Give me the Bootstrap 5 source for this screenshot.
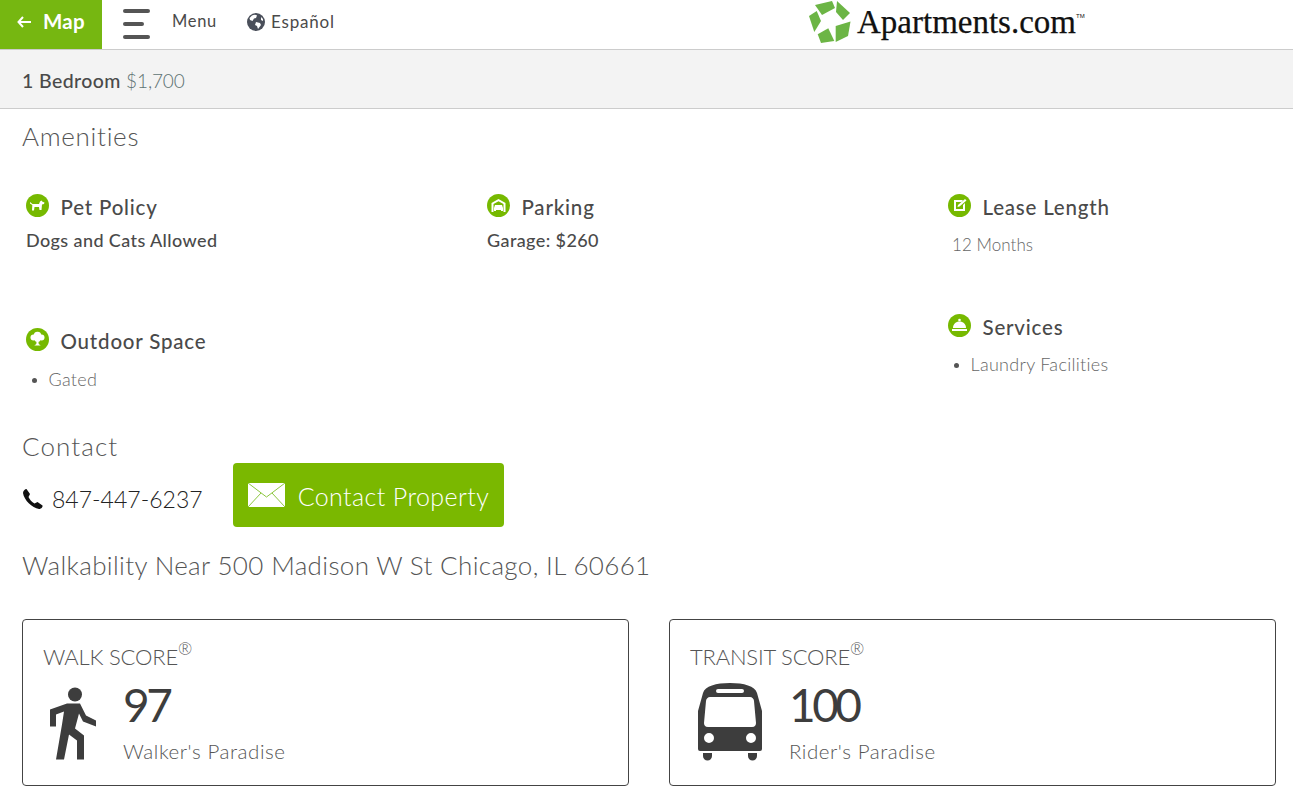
<!DOCTYPE html>
<html lang="en">
<head>
  <meta charset="UTF-8">
  <meta name="viewport" content="width=device-width, initial-scale=1.0">
  <title>1 Bedroom</title>
  <link href="https://cdn.jsdelivr.net/npm/bootstrap@5.3.0/dist/css/bootstrap.min.css" rel="stylesheet">
  <style>
    body { font-family: Lato, "Liberation Sans", sans-serif; color: #4a4a4a; overflow: hidden; }
    .top-bar { height: 50px; border-bottom: 1px solid #ccc; }
    .map-btn { width: 102px; height: 49px; background: #76b711; color: #fff; font-size: 20.5px; font-weight: 700; gap: 11px; padding: 0 0 6px 17px; letter-spacing: .2px; }
    .burger { width: 27px; margin-left: 21px; margin-right: 22px; gap: 9px; margin-top: -1px; }
    .burger span { display: block; height: 4px; background: #555; border-radius: 2px; }
    .burger span:nth-child(2) { width: 21px; }
    .menu-link { font-size: 16.5px; color: #4a4a4a; margin-top: -6px; letter-spacing: .7px; }
    .lang-link { font-size: 17px; color: #4a4a4a; margin-left: 30px; gap: 6px; letter-spacing: .8px; margin-top: -5px; }
    .logo-box { position: absolute; left: 809px; top: 0; gap: 6px; }
    .logo-word { font-family: "Liberation Serif", serif; font-size: 33px; color: #111; letter-spacing: 0; line-height: 44px; -webkit-text-stroke: .25px #111; }
    .logo-word sup { font-size: 6px; top: -15px; font-family: "Liberation Sans", sans-serif; letter-spacing: 0; -webkit-text-stroke: 0; }
    .sub-bar { height: 59px; background: #f3f3f3; border-bottom: 1px solid #ccc; padding: 4px 0 0 22px; font-size: 19.5px; font-weight: 500; letter-spacing: .4px; }
    .sub-bar .price { font-weight: 300; font-size: 19px; letter-spacing: -.1px; color: #5d7272; }
    .page-body { padding: 0 17px 0 22px; }
    .sect-title { font-size: 26px; font-weight: 300; color: #555; letter-spacing: .7px; line-height: 30px; margin: 0; }
    .amen-title { margin-top: 12px; }
    .amen-grid { padding-left: 4px; margin-top: 43px; height: 237px; }
    .amen-col { flex: 0 0 461px; }
    .amen-col-last { flex: 1 1 0; }
    .amen-item { height: 134px; }
    .amen-item.short { height: 120px; }
    .amen-head { gap: 11.500px; height: 26px; margin-bottom: 8px; }
    .amen-head h3 { font-size: 20.5px; font-weight: 500; margin: 0; color: #4a4a4a; letter-spacing: .8px; line-height: 26px; }
    .amen-ico { width: 23px; height: 23px; flex: none; margin-top: -3px; }
    .amen-bold { font-size: 18px; font-weight: 500; margin: 0; line-height: 24px; letter-spacing: .4px; }
    .amen-light { font-size: 17px; font-weight: 300; color: #666; line-height: 24px; margin: 0; letter-spacing: .05px; }
    .amen-offset { margin: 13px 0 0 4px; }
    .amen-list { list-style: none; padding: 0; margin: 12px 0 0 0; }
    .amen-list li { font-size: 18px; font-weight: 300; color: #666; line-height: 24px; letter-spacing: .3px; }
    .amen-list li::before { content: ""; display: inline-block; width: 5px; height: 5px; border-radius: 50%; background: #555; margin: 0 11.500px 3px 6px; }
    .gated-list { margin-top: 13px; }
    .contact-title { letter-spacing: 1.1px; }
    .contact-row { margin-top: 2px; gap: 30px; }
    .phone-num { font-size: 23px; font-weight: 300; color: #222; gap: 8px; letter-spacing: .02px; margin-top: 8px; }
    .contact-btn { width: 271px; height: 64px; background: #7ab800; color: #fff; font-size: 25px; font-weight: 300; gap: 13px; padding: 0 0 0 15px; border: 0; border-radius: 4px; letter-spacing: .4px; }
    .contact-btn span { margin-top: 4px; }
    .walk-title { margin-top: 23px; letter-spacing: .35px; }
    .score-row { display: grid; grid-template-columns: 607px 607px; gap: 40px; margin-top: 39px; }
    .score-box { height: 167px; border: 1px solid #444; border-radius: 4px; padding: 22px 0 0 20px; }
    .score-name { font-size: 22px; font-weight: 300; color: #555; line-height: 30px; letter-spacing: -.2px; }
    .score-name sup { font-size: 17px; top: -10px; }
    .score-num { font-size: 46px; line-height: 50px; font-weight: 400; color: #3d3d3d; letter-spacing: -3.5px; margin-top: -3px; }
    .score-txt { font-size: 20.5px; font-weight: 300; color: #555; line-height: 26px; margin: 8px 0 0 0; letter-spacing: .55px; }
    .walk-ico { width: 46px; height: 73px; margin: 4px 27px 0 7px; }
    .bus-ico { width: 64px; height: 78px; margin: 0 27px 0 8px; }
    .score-body { margin-top: 11px; }
  </style>
</head>
<body>
<div class="top-bar d-flex align-items-center position-relative">
  <a class="map-btn d-flex align-items-center text-decoration-none" href="#">
    <svg width="15" height="12" viewBox="0 0 15 12"><path d="M6 1 1.500 6 6 11M2 6h12" fill="none" stroke="#fff" stroke-width="2"/></svg>
    <span>Map</span>
  </a>
  <div class="burger d-flex flex-column"><span></span><span></span><span></span></div>
  <a class="menu-link text-decoration-none" href="#">Menu</a>
  <a class="lang-link d-flex align-items-center text-decoration-none" href="#">
    <svg width="18" height="18" viewBox="0 0 18 18"><circle cx="9" cy="9" r="9" fill="#4a4f5a"/><path d="M5 2.500c2-1 4-1 5 0L9 5 7 5.500 5.500 8 3 7 2.500 5ZM9 9l4 1 1 2-3 4-1-3-2-1ZM14 4l2 2v2l-2-1Z" fill="#fff"/></svg>
    <span>Español</span>
  </a>
  <div class="logo-box d-flex align-items-center">
    <svg width="42" height="42" viewBox="0 0 42 42"><g fill="#6cb545"><path d="M6 4 23 0l3 7-13 7Z"/><path d="M28 0l13 12-7 7-7-8Z"/><path d="M0 15l7.700-5L12 20 5.300 31Z"/><path d="M26.700 25 41.500 20.500 39 35 26.700 41Z"/><path d="M8.700 33.300 19.300 27.300 25.300 40 12 42Z"/></g></svg>
    <span class="logo-word">Apartments.com<sup>TM</sup></span>
  </div>
</div>
<div class="sub-bar d-flex align-items-center">1 Bedroom&nbsp;<span class="price">$1,700</span></div>
<div class="page-body">
  <h2 class="sect-title amen-title">Amenities</h2>
  <div class="amen-grid d-flex">
    <div class="amen-col">
      <div class="amen-item">
        <div class="amen-head d-flex align-items-center">
          <svg class="amen-ico" viewBox="0 0 23 23"><circle cx="11.500" cy="11.500" r="11.500" fill="#76b900"/><path d="M4 8l2.500 2H13l1-2.500 1.500-1 1 1.300 2 .7-.5 1.500-2 .5-.5 5.500h-2l-.5-3H8.500L8 16.500H6l.3-5.500L4 9.500Z" fill="#fff"/></svg>
          <h3>Pet Policy</h3>
        </div>
        <p class="amen-bold">Dogs and Cats Allowed</p>
      </div>
      <div class="amen-item">
        <div class="amen-head d-flex align-items-center">
          <svg class="amen-ico" viewBox="0 0 23 23"><circle cx="11.500" cy="11.500" r="11.500" fill="#76b900"/><g fill="#fff"><circle cx="11.500" cy="7.500" r="3.800"/><circle cx="7.500" cy="9.500" r="3"/><circle cx="15.500" cy="9.500" r="3"/><circle cx="11.500" cy="11" r="3"/><path d="M10.700 12h1.600l.4 4 2 1.500H8.300l2-1.500Z"/></g></svg>
          <h3>Outdoor Space</h3>
        </div>
        <ul class="amen-list gated-list"><li>Gated</li></ul>
      </div>
    </div>
    <div class="amen-col">
      <div class="amen-item">
        <div class="amen-head d-flex align-items-center">
          <svg class="amen-ico" viewBox="0 0 23 23"><circle cx="11.500" cy="11.500" r="11.500" fill="#76b900"/><path d="M4.500 18V9l7-4 7 4v9h-2V10l-5-2.800L6.500 10v8Z" fill="#fff"/><path d="M8 11h7l1 3v3h-2v-1H9v1H7v-3Z" fill="#fff"/></svg>
          <h3>Parking</h3>
        </div>
        <p class="amen-bold">Garage: $260</p>
      </div>
    </div>
    <div class="amen-col-last">
      <div class="amen-item short">
        <div class="amen-head d-flex align-items-center">
          <svg class="amen-ico" viewBox="0 0 23 23"><circle cx="11.500" cy="11.500" r="11.500" fill="#76b900"/><path d="M6 6h9l-1.500 2H8v7h7v-4l2-2v8H6Z" fill="#fff"/><path d="M10 11l7-6 1.500 1.500-7 6-2 .5Z" fill="#fff"/></svg>
          <h3>Lease Length</h3>
        </div>
        <p class="amen-light amen-offset">12 Months</p>
      </div>
      <div class="amen-item">
        <div class="amen-head d-flex align-items-center">
          <svg class="amen-ico" viewBox="0 0 23 23"><circle cx="11.500" cy="11.500" r="11.500" fill="#76b900"/><circle cx="11.500" cy="6" r="1.300" fill="#fff"/><path d="M5 14c0-4 3-6.500 6.500-6.500S18 10 18 14Z" fill="#fff"/><rect x="4" y="15" width="15" height="2" fill="#fff"/></svg>
          <h3>Services</h3>
        </div>
        <ul class="amen-list"><li>Laundry Facilities</li></ul>
      </div>
    </div>
  </div>
  <h2 class="sect-title contact-title">Contact</h2>
  <div class="contact-row d-flex align-items-center">
    <div class="phone-num d-flex align-items-center">
      <svg width="22" height="22" viewBox="0 0 22 22"><path d="M4.500 1 8 6 6.500 9c1 2.500 3.500 5 6 6.500l3-1.500 5 3.500c.5 1-1 3.500-3.500 3.500C10 20 2 12 1 5c0-2 2-4 3.500-4Z" fill="#111"/></svg>
      <span>847-447-6237</span>
    </div>
    <button class="contact-btn btn d-flex align-items-center" type="button">
      <svg width="37" height="24" viewBox="0 0 37 24"><rect width="37" height="24" fill="#fff"/><path d="M0 0 18.500 14 37 0M0 24 13 10M37 24 24 10" fill="none" stroke="#8cc63f" stroke-width="1"/></svg>
      <span>Contact Property</span>
    </button>
  </div>
  <h2 class="sect-title walk-title">Walkability Near 500 Madison W St Chicago, IL 60661</h2>
  <div class="score-row">
    <div class="score-box">
      <div class="score-name">WALK SCORE<sup>®</sup></div>
      <div class="score-body d-flex">
        <svg class="walk-ico" viewBox="0 0 46 72"><circle cx="25" cy="7" r="7" fill="#3d3d3d"/><path d="M17 16h13l6 12 10 5v6l-13-5-4-8-4 15 9 7v24h-7V53l-8-6-5 25H6L12 37l2-13-8 3v12H0V22Z" fill="#3d3d3d"/></svg>
        <div>
          <div class="score-num">97</div>
          <div class="score-txt">Walker's Paradise</div>
        </div>
      </div>
    </div>
    <div class="score-box">
      <div class="score-name">TRANSIT SCORE<sup>®</sup></div>
      <div class="score-body d-flex">
        <svg class="bus-ico" viewBox="0 0 64 78"><path d="M5 70h9v3a4.500 4.500 0 0 1-9 0ZM50 70h9v3a4.500 4.500 0 0 1-9 0Z" fill="#3d3d3d"/><path fill-rule="evenodd" d="M32 0c14 0 25 3 27 10l5 18v38a2 2 0 0 1-2 2H2a2 2 0 0 1-2-2V28L5 10C7 3 18 0 32 0ZM20 6a2 2 0 0 0 0 4h24a2 2 0 0 0 0-4ZM12 14c-2 0-4 2-4 4l-2 22c0 2 1 4 4 4h44c3 0 4-2 4-4l-2-22c0-2-2-4-4-4ZM11 50a5 5 0 1 0 0 10 5 5 0 0 0 0-10ZM53 50a5 5 0 1 0 0 10 5 5 0 0 0 0-10Z" fill="#3d3d3d"/></svg>
        <div>
          <div class="score-num">100</div>
          <div class="score-txt">Rider's Paradise</div>
        </div>
      </div>
    </div>
  </div>
</div>
<script src="https://cdn.jsdelivr.net/npm/bootstrap@5.3.0/dist/js/bootstrap.bundle.min.js"></script>
</body>
</html>
